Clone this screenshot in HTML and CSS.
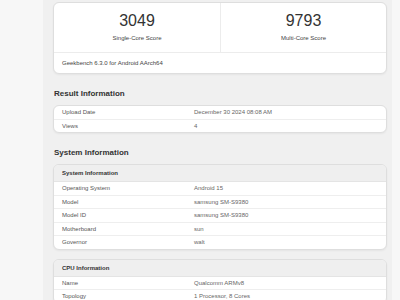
FILE: index.html
```html
<!DOCTYPE html>
<html lang="en">
<head>
  <meta charset="UTF-8" />
  <title>Geekbench Result</title>
  <link rel="stylesheet" href="styles.css">
</head>
<body>
  <div class="page">
    <div class="card">
      <div class="scores">
        <div class="score">
          <div class="score-num">3049</div>
          <div class="score-label">Single-Core Score</div>
        </div>
        <div class="score">
          <div class="score-num">9793</div>
          <div class="score-label">Multi-Core Score</div>
        </div>
      </div>
      <div class="card-foot">Geekbench 6.3.0 for Android AArch64</div>
    </div>

    <h2>Result Information</h2>
    <div class="card">
      <div class="row"><span class="key">Upload Date</span><span>December 30 2024 08:08 AM</span></div>
      <div class="row"><span class="key">Views</span><span>4</span></div>
    </div>

    <h2>System Information</h2>
    <div class="card">
      <div class="card-head">System Information</div>
      <div class="row"><span class="key">Operating System</span><span>Android 15</span></div>
      <div class="row"><span class="key">Model</span><span>samsung SM-S9380</span></div>
      <div class="row"><span class="key">Model ID</span><span>samsung SM-S9380</span></div>
      <div class="row"><span class="key">Motherboard</span><span>sun</span></div>
      <div class="row"><span class="key">Governor</span><span>walt</span></div>
    </div>

    <div class="card gap">
      <div class="card-head">CPU Information</div>
      <div class="row"><span class="key">Name</span><span>Qualcomm ARMv8</span></div>
      <div class="row"><span class="key">Topology</span><span>1 Processor, 8 Cores</span></div>
    </div>
  </div>
</body>
</html>
```

FILE: styles.css
```css
body {
  margin: 0;
  background: #f7f7f7;
  font-family: 'Liberation Sans', Arial, sans-serif;
  color: #555;
}
.page {
  margin-left: 43px;
  width: 334px;
  min-height: 300px;
  padding: 2px 5px 0 10px;
  background: #f0f0f0;
}
.card {
  background: #fff;
  border: 1px solid #dedede;
  border-radius: 6px;
  overflow: hidden;
  box-shadow: 0 1px 2px rgba(0, 0, 0, 0.05);
}
.card.gap {
  margin-top: 9px;
}
.scores {
  display: grid;
  grid-template-columns: 1fr 1fr;
  height: 49px;
  border-bottom: 1px solid #ececec;
}
.score {
  text-align: center;
  padding-top: 9px;
}
.score + .score {
  border-left: 1px solid #ececec;
}
.score-num {
  font-size: 16px;
  line-height: 18px;
  color: #333;
}
.score-label {
  font-size: 6px;
  line-height: 8px;
  margin-top: 4px;
  color: #444;
}
.card-foot {
  font-size: 6px;
  line-height: 20px;
  padding: 0 8px;
  color: #444;
}
h2 {
  font-size: 8px;
  line-height: 10px;
  margin: 15px 0 6px 1px;
  color: #333;
}
.card-head {
  background: #efefef;
  border-bottom: 1px solid #e4e4e4;
  font-size: 6px;
  font-weight: bold;
  line-height: 16px;
  padding: 0 8px;
  color: #333;
}
.row {
  display: grid;
  grid-template-columns: 132px 1fr;
  font-size: 6px;
  line-height: 12.5px;
  padding-left: 8px;
  border-bottom: 1px solid #eeeeee;
}
.row:last-child {
  border-bottom: none;
}
.row span {
  color: #666;
}
.row .key {
  color: #555;
}
```
